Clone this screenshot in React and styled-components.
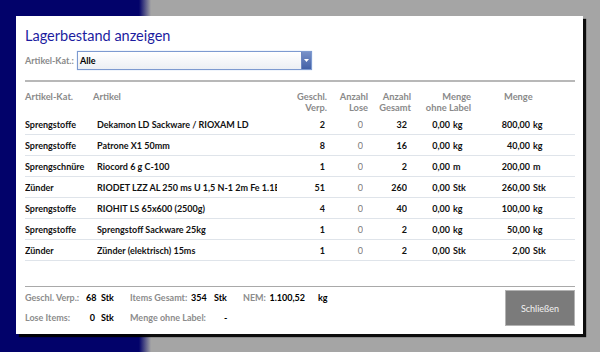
import React from 'react'
import styled, { createGlobalStyle } from 'styled-components'

const GlobalStyle = createGlobalStyle`
  html, body {
    margin: 0;
    padding: 0;
  }
  body {
    width: 600px;
    height: 352px;
    overflow: hidden;
    background: linear-gradient(to right, #02026a 0, #02026a 139px, #a5a5a5 151px);
    font-family: Lato, "Open Sans", sans-serif;
  }
`

const Screen = styled.div`
  width: 600px;
  height: 352px;
  box-sizing: border-box;
  padding: 16px 0 0 16px;
`

const Dialog = styled.div`
  width: 567px;
  height: 318px;
  box-sizing: border-box;
  padding: 11px 8px 0 9px;
  background: #fff;
  box-shadow: 3px 3px 1px rgba(0, 0, 0, 0.92);
  display: flex;
  flex-direction: column;
`

const Title = styled.h1`
  margin: 0;
  font-size: 14.5px;
  line-height: 18px;
  font-weight: 400;
  color: #1c1ca0;
`

const FilterRow = styled.div`
  display: flex;
  align-items: center;
  gap: 1px;
  margin-top: 6px;
`

const FieldLabel = styled.span`
  width: 51px;
  font-size: 9px;
  font-weight: 700;
  color: #8a8a8a;
`

const Select = styled.div`
  width: 235px;
  height: 19px;
  box-sizing: border-box;
  display: flex;
  align-items: stretch;
  border: 1px solid #7d9ad0;
  box-shadow: 0 0 1px #a8c0ea;
  background: linear-gradient(#ffffff, #eceff4);
`

const SelectValue = styled.span`
  flex: 1;
  padding-left: 2px;
  font-size: 9px;
  font-weight: 700;
  line-height: 17px;
  color: #000;
`

const SelectButton = styled.span`
  width: 9px;
  display: flex;
  align-items: center;
  justify-content: center;
  background: linear-gradient(#7891c8, #4260a6);
  border-left: 1px solid #6c86c0;
`

const Divider = styled.div`
  height: 2px;
  margin-top: 10px;
  background: #b8b8b8;
`

const HeadRow = styled.div`
  display: grid;
  grid-template-columns: 68px 187px 47px 41px 43px 60px 104px;
  margin-top: 9px;
  padding-bottom: 1px;
  font-size: 9.3px;
  font-weight: 700;
  line-height: 11px;
  color: #8a8a8a;
`

const HeadCell = styled.div`
  white-space: nowrap;
  text-align: ${p => p.$align || 'left'};
  padding-left: ${p => p.$pad || 0}px;
`

const Row = styled.div`
  display: grid;
  grid-template-columns: 72px 183px 45px 38px 44px 43px 30px 50px 45px;
  height: 21px;
  box-sizing: border-box;
  align-items: center;
  border-bottom: 1px solid #dfe4ea;
  font-size: 9px;
  font-weight: 700;
  color: #111;
`

const Cell = styled.div`
  white-space: nowrap;
  overflow: hidden;
  text-align: ${p => p.$align || 'left'};
  padding-left: ${p => p.$pad || 0}px;
  margin-right: ${p => p.$clip || 0}px;
  color: ${p => (p.$muted ? '#7a7a7a' : 'inherit')};
  font-weight: ${p => (p.$muted ? 400 : 700)};
`

const Spacer = styled.div`
  flex: 1;
`

const Footer = styled.div`
  height: 47px;
  display: flex;
  justify-content: space-between;
  border-top: 1px solid #a9a9a9;
`

const Stats = styled.div`
  display: flex;
  flex-direction: column;
`

const StatLine = styled.div`
  display: flex;
  height: 20px;
  align-items: center;
  font-size: 9px;
`

const Stat = styled.div`
  display: grid;
  grid-template-columns: ${p => p.$cols};
  width: ${p => p.$width}px;
`

const StatLabel = styled.span`
  font-weight: 700;
  color: #8c8c8c;
`

const StatValue = styled.span`
  font-weight: 700;
  color: #000;
  text-align: right;
`

const StatUnit = styled.span`
  font-weight: 700;
  color: #000;
  padding-left: ${p => p.$gap}px;
`

const CloseButton = styled.button`
  width: 70px;
  height: 36px;
  margin-top: 3px;
  padding: 0;
  border: 1px solid #b3b3b3;
  background: #7b7b7b;
  color: #f2f2f2;
  font-family: Lato, "Open Sans", sans-serif;
  font-size: 9px;
`

const rows = [
  ['Sprengstoffe', 'Dekamon LD Sackware / RIOXAM LD', '2', '0', '32', '0,00', 'kg', '800,00', 'kg'],
  ['Sprengstoffe', 'Patrone X1 50mm', '8', '0', '16', '0,00', 'kg', '40,00', 'kg'],
  ['Sprengschnüre', 'Riocord 6 g C-100', '1', '0', '2', '0,00', 'm', '200,00', 'm'],
  ['Zünder', 'RIODET LZZ AL 250 ms U 1,5 N-1 2m Fe 1.1B', '51', '0', '260', '0,00', 'Stk', '260,00', 'Stk'],
  ['Sprengstoffe', 'RIOHIT LS 65x600 (2500g)', '4', '0', '40', '0,00', 'kg', '100,00', 'kg'],
  ['Sprengstoffe', 'Sprengstoff Sackware 25kg', '1', '0', '2', '0,00', 'kg', '50,00', 'kg'],
  ['Zünder', 'Zünder (elektrisch) 15ms', '1', '0', '2', '0,00', 'Stk', '2,00', 'Stk'],
]

export default function App() {
  return (
    <Screen>
      <GlobalStyle />
      <Dialog>
        <Title>Lagerbestand anzeigen</Title>
        <FilterRow>
          <FieldLabel>Artikel-Kat.:</FieldLabel>
          <Select>
            <SelectValue>Alle</SelectValue>
            <SelectButton>
              <svg width="5" height="3" viewBox="0 0 5 3">
                <path d="M0 0h5L2.5 3z" fill="#fff" />
              </svg>
            </SelectButton>
          </Select>
        </FilterRow>
        <Divider />
        <HeadRow>
          <HeadCell>Artikel-Kat.</HeadCell>
          <HeadCell>Artikel</HeadCell>
          <HeadCell $align="right">Geschl.<br />Verp.</HeadCell>
          <HeadCell $align="right">Anzahl<br />Lose</HeadCell>
          <HeadCell $align="right">Anzahl<br />Gesamt</HeadCell>
          <HeadCell $align="right">Menge<br />ohne Label</HeadCell>
          <HeadCell $pad={33}>Menge</HeadCell>
        </HeadRow>
        {rows.map((r, i) => (
          <Row key={i}>
            <Cell>{r[0]}</Cell>
            <Cell $clip={3}>{r[1]}</Cell>
            <Cell $align="right">{r[2]}</Cell>
            <Cell $align="right" $muted>{r[3]}</Cell>
            <Cell $align="right">{r[4]}</Cell>
            <Cell $align="right">{r[5]}</Cell>
            <Cell $pad={3}>{r[6]}</Cell>
            <Cell $align="right">{r[7]}</Cell>
            <Cell $pad={3}>{r[8]}</Cell>
          </Row>
        ))}
        <Spacer />
        <Footer>
          <Stats>
            <StatLine>
              <Stat $cols="61px 9px auto" $width={105}>
                <StatLabel>Geschl. Verp.:</StatLabel>
                <StatValue>68</StatValue>
                <StatUnit $gap={6}>Stk</StatUnit>
              </Stat>
              <Stat $cols="61px 14px auto" $width={113}>
                <StatLabel>Items Gesamt:</StatLabel>
                <StatValue>354</StatValue>
                <StatUnit $gap={9}>Stk</StatUnit>
              </Stat>
              <Stat $cols="25px 37px auto" $width={100}>
                <StatLabel>NEM:</StatLabel>
                <StatValue>1.100,52</StatValue>
                <StatUnit $gap={13}>kg</StatUnit>
              </Stat>
            </StatLine>
            <StatLine>
              <Stat $cols="61px 9px auto" $width={105}>
                <StatLabel>Lose Items:</StatLabel>
                <StatValue>0</StatValue>
                <StatUnit $gap={6}>Stk</StatUnit>
              </Stat>
              <Stat $cols="94px auto" $width={113}>
                <StatLabel>Menge ohne Label:</StatLabel>
                <StatUnit $gap={0}>-</StatUnit>
              </Stat>
            </StatLine>
          </Stats>
          <CloseButton>Schließen</CloseButton>
        </Footer>
      </Dialog>
    </Screen>
  )
}
